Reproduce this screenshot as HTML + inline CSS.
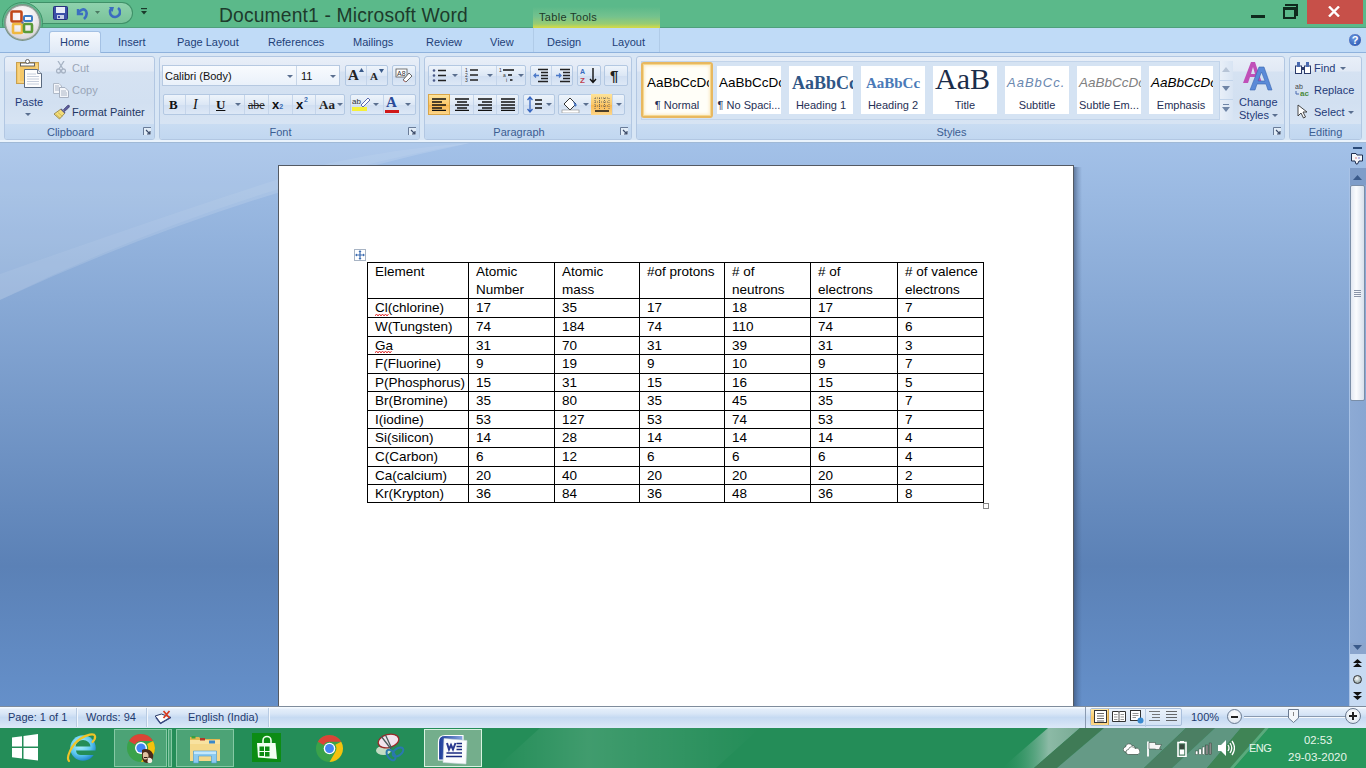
<!DOCTYPE html>
<html><head><meta charset="utf-8">
<style>
*{margin:0;padding:0;box-sizing:border-box}
html,body{width:1366px;height:768px;overflow:hidden;font-family:"Liberation Sans",sans-serif;background:#9dbde6}
.a{position:absolute}
#title{left:0;top:0;width:1366px;height:28px;background:#5bb98a}
#tabs{left:0;top:28px;width:1366px;height:25px;background:#c0dbf7;border-bottom:1px solid #8fb2dc}
#ribbon{left:0;top:53px;width:1366px;height:90px;background:linear-gradient(#d9e7f6,#c9dcf1)}
.grp{position:absolute;top:3px;height:84px;border:1px solid #b2c7e2;border-radius:3px;background:linear-gradient(#e8eff8 0,#e1e9f5 14px,#d5e2f2 15px,#d2e0f1 55%,#dbe7f5 100%)}
.glabel{position:absolute;left:0;right:18px;bottom:0;height:16px;background:#c3d8f0;color:#3b5d92;font-size:11px;text-align:center;line-height:17px;padding-top:1px;white-space:nowrap}
.glabel.full{right:0}
.glbg{position:absolute;left:0;right:0;bottom:0;height:15px;background:linear-gradient(#c9dcf2,#c1d7f0);border-radius:0 0 2px 2px}
#doc{left:0;top:143px;width:1366px;height:564px;background:linear-gradient(#a3c1e8 0%,#5b81b6 75%,#6590ca 100%)}
#page{left:278px;top:165px;width:796px;height:560px;background:#fff;border:1px solid #545a63}
#pshadow{left:1074px;top:167px;width:8px;height:540px;background:linear-gradient(90deg,rgba(50,70,105,.55),rgba(60,85,125,.25) 50%,rgba(80,110,160,0))}
#status{left:0;top:706px;width:1366px;height:22px;border-top:1px solid #7f8c9c;background:linear-gradient(#f4faff 0,#f4faff 1px,#e4eefa 2px,#dae7f7 30%,#c6daf2 50%,#cfe0f4 72%,#dce9f8 100%)}
#taskbar{left:0;top:728px;width:1366px;height:40px;background:#268a56}
.tab{position:absolute;top:8px;font-size:11px;line-height:13px;color:#1e3f78;white-space:nowrap}
table{border-collapse:collapse}
</style></head><body>
<!-- TITLE BAR -->
<div id="title" class="a">
  <div class="a" style="left:0;top:27px;width:1366px;height:1px;background:#4f9f7c"></div>
  <div class="a" style="left:30px;top:2px;width:103px;height:22px;border:1px solid #3f9068;border-left:none;border-radius:0 11px 11px 0;background:linear-gradient(#8fd2ad,#79c29a)"></div>
  <div class="a" style="left:0;top:0;width:60px;height:27px;overflow:hidden"><div class="a" style="left:2px;top:2px;width:41px;height:41px;border-radius:50%;border:1px solid #3f9068;background:#5ebd8d"></div></div>
  <!-- save -->
  <svg class="a" style="left:53px;top:6px" width="15" height="14" viewBox="0 0 15 14"><rect x="0.5" y="0.5" width="14" height="13" rx="1" fill="#3b4fa8" stroke="#28307a"/><rect x="3" y="1" width="9" height="6" fill="#e8ecf8"/><rect x="4" y="9" width="7" height="4" fill="#c7cfe8"/><rect x="5" y="10" width="2" height="2" fill="#3b4fa8"/></svg>
  <!-- undo -->
  <svg class="a" style="left:75px;top:6px" width="14" height="14" viewBox="0 0 14 14"><path d="M3 3 L3 8 L8 8" fill="none" stroke="#3c6fc0" stroke-width="2.4"/><path d="M3 7 Q8 1 11 5 Q13 9 9 13" fill="none" stroke="#3c6fc0" stroke-width="2.6"/></svg>
  <svg class="a" style="left:95px;top:11px" width="5" height="3" viewBox="0 0 5 3"><path d="M0 0H5L2.5 3z" fill="#4c7a62"/></svg>
  <!-- redo -->
  <svg class="a" style="left:108px;top:6px" width="13" height="14" viewBox="0 0 13 14"><path d="M10 2 A5 5 0 1 1 3.5 2.5" fill="none" stroke="#3b6cc0" stroke-width="2.6"/><path d="M1 1 L6 1 L4.5 6z" fill="#3b6cc0"/></svg>
  <svg class="a" style="left:141px;top:8px" width="6" height="7" viewBox="0 0 6 7"><rect x="0" y="0" width="6" height="1.2" fill="#1b3a2b"/><path d="M0 3H6L3 6.5z" fill="#1b3a2b"/></svg>
  <div class="a" style="left:219px;top:3px;font-size:19.3px;letter-spacing:0.15px;color:#1d3b2c;white-space:nowrap;line-height:26px">Document1 - Microsoft Word</div>
  <!-- table tools -->
  <div class="a" style="left:533px;top:7px;width:127px;height:21px;background:linear-gradient(#5cb98a 0%,#74c28e 45%,#98cc72 80%,#c8d850 95%,#d8d840 100%)"></div>
  <div class="a" style="left:539px;top:10px;font-size:11px;letter-spacing:0.3px;color:#1c3a2a;line-height:15px;white-space:nowrap">Table Tools</div>
  <!-- window buttons -->
  <div class="a" style="left:1251px;top:15px;width:14px;height:3px;background:#0f2a1d"></div>
  <div class="a" style="left:1285px;top:4px;width:13px;height:12px;border:2px solid #0f2a1d;border-left:none;border-bottom:none"></div>
  <div class="a" style="left:1283px;top:7px;width:13px;height:12px;border:2px solid #0f2a1d;border-top-width:3px"></div>
  <div class="a" style="left:1307px;top:0;width:56px;height:24px;background:#c75049"></div>
  <svg class="a" style="left:1328px;top:6px" width="12" height="11" viewBox="0 0 12 11"><path d="M1 0.5 L11 10.5 M11 0.5 L1 10.5" stroke="#fff" stroke-width="2.4"/></svg>
</div>
<!-- TABS -->
<div id="tabs" class="a">
  <div class="a" style="left:49px;top:3px;width:52px;height:23px;border:1px solid #a4c1e4;border-bottom:none;border-radius:3px 3px 0 0;background:linear-gradient(#f4f8fd,#dfe9f6)"></div>
  <div class="a" style="left:50px;top:24px;width:50px;height:2px;background:#dfe9f6"></div>
  <div class="a" style="left:533px;top:0;width:1px;height:24px;background:#b0cbe8"></div>
  <div class="a" style="left:659px;top:0;width:1px;height:24px;background:#b0cbe8"></div>
  <div class="tab" style="left:60px">Home</div>
  <div class="tab" style="left:118px">Insert</div>
  <div class="tab" style="left:177px">Page Layout</div>
  <div class="tab" style="left:268px">References</div>
  <div class="tab" style="left:353px">Mailings</div>
  <div class="tab" style="left:426px">Review</div>
  <div class="tab" style="left:490px">View</div>
  <div class="tab" style="left:547px">Design</div>
  <div class="tab" style="left:612px">Layout</div>
  <div class="a" style="left:1348px;top:5px;width:14px;height:14px;border-radius:50%;background:radial-gradient(circle at 40% 35%,#6b98e0,#1d4aa8);border:1px solid #c8d8f0;color:#fff;font-size:11px;font-weight:bold;text-align:center;line-height:12px">?</div>
</div>
<div class="a" style="left:0;top:0;z-index:5">
  <!-- office button -->
  <div class="a" style="left:4px;top:4px;width:37px;height:37px;border-radius:50%;background:#7c9488"></div>
  <div class="a" style="left:5px;top:5px;width:35px;height:35px;border-radius:50%;background:radial-gradient(circle at 50% 35%,#ffffff 0%,#f1eef0 45%,#d8d3d8 80%,#c4c8cc 100%);border:1px solid #9aa8a0"></div>
  <svg class="a" style="left:10px;top:10px" width="25" height="25" viewBox="0 0 25 25">
    <rect x="1.5" y="1.5" width="10" height="10" rx="1" fill="none" stroke="#c04818" stroke-width="2.6"/>
    <rect x="14" y="6" width="8" height="5" rx="1" fill="none" stroke="#3b7bc4" stroke-width="2"/>
    <rect x="3" y="14" width="9" height="9" rx="1" fill="none" stroke="#f0b840" stroke-width="2.6"/>
    <rect x="14" y="14" width="8" height="8" rx="1" fill="none" stroke="#5a9a38" stroke-width="2.6"/>
    <circle cx="12.5" cy="12.5" r="1.2" fill="#6a6a9a"/>
  </svg>
</div>
<!-- RIBBON -->
<div id="ribbon" class="a">
<style>
#ribbon .t{position:absolute;font-size:11px;line-height:13px;color:#1f3763;white-space:nowrap}
#ribbon .bx{position:absolute;border:1px solid #b3c8e2;border-radius:2px;background:linear-gradient(#eef4fb,#dce7f5 50%,#d0def1 51%,#dde8f6)}
#ribbon .sep{position:absolute;width:1px;background:#c5d5ea}
#ribbon .dd{position:absolute;width:0;height:0;border-left:3px solid transparent;border-right:3px solid transparent;border-top:3px solid #5a6f8f}
#ribbon .hl{position:absolute;background:linear-gradient(#fde39a,#fbc86a 50%,#f9b74e 51%,#fcd68a);border:1px solid #d9a64a}
#ribbon .sty{position:absolute;top:13px;width:64px;height:48px;background:#fff}
#ribbon .sty .s{position:absolute;left:0;width:100%;top:9px;text-align:center;white-space:nowrap;overflow:hidden;line-height:16px}
#ribbon .sty .l{position:absolute;left:0;width:100%;top:33px;text-align:center;font-size:11px;color:#1f2f55;white-space:nowrap;line-height:13px}
#ribbon .launch{position:absolute;width:9px;height:9px}
</style>
<div class="a" style="left:0;top:0;width:1366px;height:90px;background:#d8e6f5"></div>
<div class="a" style="left:0;top:87px;width:1366px;height:2px;background:#eaf3fc"></div>
<div class="a" style="left:0;top:89px;width:1366px;height:1px;background:#a0b9d6"></div>

<!-- Clipboard group -->
<div class="grp" style="left:4px;width:151px">
  <div class="glbg"></div><div class="glabel" style="background:none">Clipboard</div>
  <div class="launch" style="left:138px;top:70px"><svg width="9" height="9" viewBox="0 0 9 9" style="position:absolute;left:0;top:0"><path d="M0.5 8V0.5H8" fill="none" stroke="#6a7c98"/><path d="M1 1H8V8H1z" fill="#f4f8fc" fill-opacity="0.6"/><path d="M3 3L7 7M7 4V7H4" fill="none" stroke="#3a4a68" stroke-width="1.1"/></svg></div>
</div>
<!-- paste icon -->
<svg class="a" style="left:15px;top:6px" width="28" height="32" viewBox="0 0 28 32">
  <rect x="1.5" y="3.5" width="22" height="21" fill="#f5c868" stroke="#c8a050"/>
  <rect x="4" y="6" width="18" height="17" fill="none" stroke="#f9dc98" stroke-width="1"/>
  <rect x="5.5" y="4" width="14" height="3" fill="#fff" stroke="#555" stroke-width="0.9"/>
  <circle cx="12.5" cy="2.5" r="2" fill="#fff" stroke="#555" stroke-width="0.9"/>
  <path d="M9.5 10.5H22.5L26.5 14.5V28.5H9.5z" fill="#fdfdfd" stroke="#5a6a80"/>
  <path d="M22.5 10.5V14.5H26.5" fill="#e8ecf2" stroke="#5a6a80" stroke-width="0.8"/>
  <path d="M12 15H21M12 17.5H24M12 20H24M12 22.5H24M12 25H24" stroke="#c0c8d8" stroke-width="0.9"/>
</svg>
<div class="t" style="left:15px;top:43px;color:#1f3a78">Paste</div>
<div class="dd" style="left:25px;top:60px"></div>
<!-- cut -->
<svg class="a" style="left:56px;top:8px" width="10" height="13" viewBox="0 0 10 13"><path d="M2 0L7 8M8 0L3 8" stroke="#a7b3c4" stroke-width="1.3"/><circle cx="2.5" cy="10" r="2" fill="none" stroke="#a7b3c4" stroke-width="1.3"/><circle cx="7.5" cy="10" r="2" fill="none" stroke="#a7b3c4" stroke-width="1.3"/></svg>
<div class="t" style="left:72px;top:9px;color:#9aa6b8">Cut</div>
<!-- copy -->
<svg class="a" style="left:53px;top:30px" width="16" height="15" viewBox="0 0 16 15"><path d="M0.5 0.5H6L8.5 3V10.5H0.5z" fill="#f4f6fa" stroke="#b0bac8"/><path d="M2 3H6M2 5H7M2 7H7" stroke="#9aa6b8" stroke-width="0.8"/><path d="M6.5 4.5H12L15.5 8V14.5H6.5z" fill="#f4f6fa" stroke="#a8b2c2"/><path d="M8 8H13M8 10H14M8 12H14" stroke="#9aa6b8" stroke-width="0.8"/></svg>
<div class="t" style="left:72px;top:31px;color:#9aa6b8">Copy</div>
<!-- format painter -->
<svg class="a" style="left:53px;top:51px" width="17" height="16" viewBox="0 0 17 16"><path d="M10.5 5.5L14.5 1.5Q16 0.5 16.5 2Q16.5 3 15.5 4L11.5 7.5z" fill="#5a5a9a" stroke="#3a3a6a" stroke-width="0.6"/><path d="M8 5L12 9L6.5 15L1 10z" fill="#f2dc78" stroke="#8a7a40" stroke-width="0.8"/><path d="M3 10.5L7 14M5 8.5L9.5 12.5" stroke="#c8b050" stroke-width="0.8"/><path d="M8 5L12 9" stroke="#5a5a8a" stroke-width="1.2"/></svg>
<div class="t" style="left:72px;top:53px;color:#1f3763">Format Painter</div>

<!-- Font group -->
<div class="grp" style="left:159px;width:261px">
  <div class="glbg"></div><div class="glabel" style="background:none">Font</div>
  <div class="launch" style="left:248px;top:70px"><svg width="9" height="9" viewBox="0 0 9 9" style="position:absolute;left:0;top:0"><path d="M0.5 8V0.5H8" fill="none" stroke="#6a7c98"/><path d="M1 1H8V8H1z" fill="#f4f8fc" fill-opacity="0.6"/><path d="M3 3L7 7M7 4V7H4" fill="none" stroke="#3a4a68" stroke-width="1.1"/></svg></div>
</div>
<div class="a" style="left:162px;top:12px;width:178px;height:21px;border:1px solid #b6c9e1;background:linear-gradient(#f8fbfe,#eaf1fa)"></div>
<div class="a" style="left:296px;top:13px;width:1px;height:19px;background:#c8d6e8"></div>
<div class="t" style="left:165px;top:17px;color:#111">Calibri (Body)</div>
<div class="dd" style="left:287px;top:22px"></div>
<div class="t" style="left:301px;top:17px;color:#111">11</div>
<div class="dd" style="left:330px;top:22px"></div>
<div class="bx" style="left:345px;top:12px;width:43px;height:21px"></div>
<div class="sep" style="left:366px;top:13px;height:19px"></div>
<div class="a" style="left:348px;top:14px;font-family:'Liberation Serif';font-weight:bold;font-size:15px;line-height:17px;color:#222">A</div>
<svg class="a" style="left:359px;top:15px" width="5" height="4"><path d="M0 4H5L2.5 0z" fill="#3a5a8a"/></svg>
<div class="a" style="left:370px;top:17px;font-family:'Liberation Serif';font-weight:bold;font-size:11px;line-height:13px;color:#222">A</div>
<svg class="a" style="left:379px;top:16px" width="5" height="4"><path d="M0 0H5L2.5 4z" fill="#3a5a8a"/></svg>
<div class="bx" style="left:392px;top:12px;width:24px;height:21px"></div>
<svg class="a" style="left:395px;top:15px" width="18" height="15" viewBox="0 0 18 15"><rect x="1" y="1" width="11" height="8" fill="#fff" stroke="#555" stroke-width="0.8"/><text x="2" y="8" font-size="7" font-family="Liberation Sans" fill="#333">A8</text><path d="M8 12L14 5L17 8L11 14z" fill="#fff" stroke="#666"/><path d="M8 12L11 14L9.5 14z" fill="#e08080"/></svg>
<!-- row2 -->
<div class="bx" style="left:163px;top:41px;width:182px;height:21px"></div>
<div class="sep" style="left:185px;top:42px;height:19px"></div>
<div class="sep" style="left:209px;top:42px;height:19px"></div>
<div class="sep" style="left:244px;top:42px;height:19px"></div>
<div class="sep" style="left:268px;top:42px;height:19px"></div>
<div class="sep" style="left:292px;top:42px;height:19px"></div>
<div class="sep" style="left:315px;top:42px;height:19px"></div>
<div class="a" style="left:169px;top:44px;font-family:'Liberation Serif';font-weight:bold;font-size:13px;line-height:15px;color:#111">B</div>
<div class="a" style="left:193px;top:44px;font-family:'Liberation Serif';font-style:italic;font-size:14px;line-height:15px;color:#111">I</div>
<div class="a" style="left:216px;top:44px;font-family:'Liberation Serif';font-weight:bold;font-size:13px;line-height:15px;color:#111;text-decoration:underline">U</div>
<div class="dd" style="left:235px;top:50px"></div>
<div class="a" style="left:248px;top:45px;font-family:'Liberation Serif';font-size:12px;line-height:14px;color:#222;text-decoration:line-through">abe</div>
<div class="a" style="left:272px;top:44px;font-family:'Liberation Sans';font-weight:bold;font-size:13px;line-height:15px;color:#111">x<span style="font-size:7px;color:#3a6ab0">2</span></div>
<div class="a" style="left:296px;top:44px;font-family:'Liberation Sans';font-weight:bold;font-size:13px;line-height:15px;color:#111">x</div><div class="a" style="left:304px;top:43px;font-size:7px;line-height:8px;font-weight:bold;color:#3a6ab0">2</div>
<div class="a" style="left:319px;top:44px;font-family:'Liberation Serif';font-weight:bold;font-size:13px;line-height:15px;color:#222">Aa</div>
<div class="dd" style="left:337px;top:50px"></div>
<div class="bx" style="left:350px;top:41px;width:66px;height:21px"></div>
<div class="sep" style="left:383px;top:42px;height:19px"></div>
<svg class="a" style="left:352px;top:43px" width="20" height="16" viewBox="0 0 20 16"><rect x="0" y="11" width="15" height="4" fill="#f5f03a"/><text x="0" y="8" font-size="8" font-family="Liberation Sans" fill="#333">ab</text><path d="M9 9L16 2L18 4L11 11z" fill="#fff" stroke="#5a6ab0"/></svg>
<div class="dd" style="left:373px;top:50px"></div>
<div class="a" style="left:386px;top:42px;font-family:'Liberation Serif';font-size:15px;line-height:15px;color:#2a4a98;font-weight:bold">A</div>
<div class="a" style="left:385px;top:57px;width:14px;height:3px;background:#d01818"></div>
<div class="dd" style="left:405px;top:50px"></div>

<!-- Paragraph group -->
<div class="grp" style="left:424px;width:208px">
  <div class="glbg"></div><div class="glabel" style="background:none">Paragraph</div>
  <div class="launch" style="left:195px;top:70px"><svg width="9" height="9" viewBox="0 0 9 9" style="position:absolute;left:0;top:0"><path d="M0.5 8V0.5H8" fill="none" stroke="#6a7c98"/><path d="M1 1H8V8H1z" fill="#f4f8fc" fill-opacity="0.6"/><path d="M3 3L7 7M7 4V7H4" fill="none" stroke="#3a4a68" stroke-width="1.1"/></svg></div>
</div>
<div class="bx" style="left:428px;top:12px;width:98px;height:21px"></div>
<div class="sep" style="left:461px;top:13px;height:19px"></div>
<div class="sep" style="left:496px;top:13px;height:19px"></div>
<svg class="a" style="left:432px;top:15px" width="18" height="15" viewBox="0 0 18 15"><circle cx="2" cy="2.5" r="1.3" fill="#4a5a8a"/><circle cx="2" cy="7.5" r="1.3" fill="#4a5a8a"/><circle cx="2" cy="12.5" r="1.3" fill="#4a5a8a"/><path d="M6 2.5H14M6 7.5H14M6 12.5H14" stroke="#222" stroke-width="1.4"/></svg>
<div class="dd" style="left:452px;top:21px"></div>
<svg class="a" style="left:465px;top:14px" width="18" height="16" viewBox="0 0 18 16"><text x="0" y="5" font-size="5" font-family="Liberation Sans" fill="#333">1</text><text x="0" y="10" font-size="5" font-family="Liberation Sans" fill="#333">2</text><text x="0" y="15" font-size="5" font-family="Liberation Sans" fill="#333">3</text><path d="M5 3H13M5 8H13M5 13H13" stroke="#222" stroke-width="1.4"/></svg>
<div class="dd" style="left:487px;top:21px"></div>
<svg class="a" style="left:499px;top:14px" width="18" height="16" viewBox="0 0 18 16"><text x="0" y="5" font-size="5" font-family="Liberation Sans" fill="#333">1</text><text x="4" y="10" font-size="5" font-family="Liberation Sans" fill="#333">a</text><text x="7" y="15" font-size="5" font-family="Liberation Sans" fill="#333">i</text><path d="M4 3H15M9 8H13M11 13H13.5" stroke="#111" stroke-width="1.4"/></svg>
<div class="dd" style="left:518px;top:21px"></div>
<div class="bx" style="left:530px;top:12px;width:43px;height:21px"></div>
<div class="sep" style="left:551px;top:13px;height:19px"></div>
<svg class="a" style="left:533px;top:15px" width="16" height="15" viewBox="0 0 16 15"><path d="M5 1.5H15M8 4.5H15M8 7.5H15M8 10.5H15M5 13.5H15" stroke="#222" stroke-width="1.3"/><path d="M6 7.5H1M3 5.5L1 7.5L3 9.5" stroke="#4a78c8" stroke-width="1.3" fill="none"/></svg>
<svg class="a" style="left:555px;top:15px" width="16" height="15" viewBox="0 0 16 15"><path d="M5 1.5H15M8 4.5H15M8 7.5H15M8 10.5H15M5 13.5H15" stroke="#222" stroke-width="1.3"/><path d="M1 7.5H6M4 5.5L6 7.5L4 9.5" stroke="#4a78c8" stroke-width="1.3" fill="none"/></svg>
<div class="bx" style="left:577px;top:12px;width:24px;height:21px"></div>
<svg class="a" style="left:580px;top:14px" width="18" height="17" viewBox="0 0 18 17"><text x="0" y="7" font-size="7" font-family="Liberation Sans" fill="#3a6ac0" font-weight="bold">A</text><text x="0" y="16" font-size="8" font-family="Liberation Sans" fill="#c04050" font-weight="bold">Z</text><path d="M13 1V15M10 12L13 15.5L16 12" stroke="#111" stroke-width="1.4" fill="none"/></svg>
<div class="bx" style="left:604px;top:12px;width:24px;height:21px"></div>
<div class="a" style="left:610px;top:14px;font-size:15px;font-weight:bold;line-height:17px;color:#222">¶</div>
<!-- row2 paragraph -->
<div class="bx" style="left:428px;top:41px;width:91px;height:21px"></div>
<div class="hl" style="left:428px;top:41px;width:22px;height:21px"></div>
<div class="sep" style="left:473px;top:42px;height:19px"></div>
<div class="sep" style="left:496px;top:42px;height:19px"></div>
<svg class="a" style="left:432px;top:45px" width="14" height="13" viewBox="0 0 14 13"><path d="M0 1H14M0 4H10M0 7H14M0 10H10M0 12.5H14" stroke="#111" stroke-width="1.3"/></svg>
<svg class="a" style="left:455px;top:45px" width="14" height="13" viewBox="0 0 14 13"><path d="M0 1H14M2 4H12M0 7H14M2 10H12M0 12.5H14" stroke="#111" stroke-width="1.3"/></svg>
<svg class="a" style="left:478px;top:45px" width="14" height="13" viewBox="0 0 14 13"><path d="M0 1H14M4 4H14M0 7H14M4 10H14M0 12.5H14" stroke="#111" stroke-width="1.3"/></svg>
<svg class="a" style="left:501px;top:45px" width="14" height="13" viewBox="0 0 14 13"><path d="M0 1H14M0 4H14M0 7H14M0 10H14M0 12.5H14" stroke="#111" stroke-width="1.3"/></svg>
<div class="bx" style="left:523px;top:41px;width:32px;height:21px"></div>
<svg class="a" style="left:527px;top:43px" width="20" height="17" viewBox="0 0 20 17"><path d="M3 1V16M0.5 4L3 1L5.5 4M0.5 13L3 16L5.5 13" stroke="#3a68c0" stroke-width="1.3" fill="none"/><path d="M8 4H15M8 8H15M8 12H15" stroke="#111" stroke-width="1.3"/></svg>
<div class="dd" style="left:546px;top:50px"></div>
<div class="bx" style="left:558px;top:41px;width:67px;height:21px"></div>
<div class="hl" style="left:591px;top:41px;width:21px;height:21px;border:none"></div>
<div class="sep" style="left:612px;top:42px;height:19px"></div>
<svg class="a" style="left:561px;top:43px" width="20" height="17" viewBox="0 0 20 17"><path d="M3 8L9 2L15 8L9 14z" fill="#fff" stroke="#333"/><path d="M12 5L16 9L14 11" fill="#4a78c8"/><rect x="1" y="14" width="17" height="3" fill="#fff" stroke="#888" stroke-width="0.6"/></svg>
<div class="dd" style="left:583px;top:50px"></div>
<svg class="a" style="left:594px;top:44px" width="16" height="15" viewBox="0 0 16 15"><path d="M1 1H15V13M1 1V13M1 5H15M1 9H15M5.5 1V13M10.5 1V13" stroke="#555" stroke-width="0.8" stroke-dasharray="1 1" fill="none"/><path d="M1 14H15" stroke="#111" stroke-width="1.5"/></svg>
<div class="dd" style="left:616px;top:50px"></div>

<!-- Styles group -->
<div class="grp" style="left:636px;width:649px">
  <div class="glbg"></div><div class="glabel" style="background:none">Styles</div>
  <div class="launch" style="left:636px;top:70px"><svg width="9" height="9" viewBox="0 0 9 9" style="position:absolute;left:0;top:0"><path d="M0.5 8V0.5H8" fill="none" stroke="#6a7c98"/><path d="M1 1H8V8H1z" fill="#f4f8fc" fill-opacity="0.6"/><path d="M3 3L7 7M7 4V7H4" fill="none" stroke="#3a4a68" stroke-width="1.1"/></svg></div>
</div>
<div class="a" style="left:641px;top:8px;width:592px;height:59px;border:1px solid #c2d4ea;background:#d5e3f3"></div>
<div class="a" style="left:641px;top:9px;width:72px;height:56px;border:2px solid #e8b860;border-radius:3px;box-shadow:inset 0 0 0 1px #f6d890,inset 0 0 3px 2px #fbeccb;background:#fffef8"></div>
<div class="sty" style="left:645px;background:transparent"><div class="s" style="font-size:13.5px;color:#000;text-align:left;padding-left:2px">AaBbCcDc</div><div class="l">¶ Normal</div></div>
<div class="sty" style="left:717px"><div class="s" style="font-size:13.5px;color:#000;text-align:left;padding-left:2px">AaBbCcDc</div><div class="l">¶ No Spaci...</div></div>
<div class="sty" style="left:789px"><div class="s" style="font-family:'Liberation Serif';font-weight:bold;font-size:18px;color:#2f5686;text-align:left;padding-left:3px">AaBbCc</div><div class="l">Heading 1</div></div>
<div class="sty" style="left:861px"><div class="s" style="font-family:'Liberation Serif';font-weight:bold;font-size:15px;color:#4a7ab8">AaBbCc</div><div class="l">Heading 2</div></div>
<div class="sty" style="left:933px"><div class="s" style="font-family:'Liberation Serif';font-size:30px;top:-2px;line-height:30px;color:#1b2d4a;text-align:left;padding-left:2px">AaB</div><div class="l">Title</div></div>
<div class="sty" style="left:1005px"><div class="s" style="font-style:italic;font-size:13px;color:#6a88b0;letter-spacing:1px;text-align:left;padding-left:2px">AaBbCc.</div><div class="l">Subtitle</div></div>
<div class="sty" style="left:1077px"><div class="s" style="font-style:italic;font-size:13.5px;color:#808080;text-align:left;padding-left:2px">AaBbCcDc</div><div class="l">Subtle Em...</div></div>
<div class="sty" style="left:1149px"><div class="s" style="font-style:italic;font-size:13.5px;color:#000;text-align:left;padding-left:2px">AaBbCcDc</div><div class="l">Emphasis</div></div>
<div class="a" style="left:1219px;top:8px;width:14px;height:59px;border-left:1px solid #c2d4ea;background:linear-gradient(90deg,#e8eff8,#d8e4f3)"></div>
<div class="a" style="left:1219px;top:27px;width:14px;height:1px;background:#c2d4ea"></div>
<div class="a" style="left:1219px;top:46px;width:14px;height:1px;background:#c2d4ea"></div>
<svg class="a" style="left:1222px;top:14px" width="8" height="5"><path d="M0 5H8L4 0z" fill="#b7c4d6"/></svg>
<svg class="a" style="left:1222px;top:33px" width="8" height="5"><path d="M0 0H8L4 5z" fill="#6f85a6"/></svg>
<div class="a" style="left:1223px;top:51px;width:6px;height:1px;background:#6f85a6"></div>
<svg class="a" style="left:1222px;top:54px" width="8" height="5"><path d="M0 0H8L4 5z" fill="#6f85a6"/></svg>
<svg class="a" style="left:1241px;top:8px" width="34" height="30" viewBox="0 0 34 30"><path d="M2 22L10 1H14L21 22H17L15 16H9L7 22z M10 13H14L12 6z" fill="#c050b8"/><path d="M9 29L18 6H23L31 29H27L25 23H16L14 29z M17 20H24L20.5 11z" fill="#5a8ad8" stroke="#3a66b0" stroke-width="0.6"/></svg>
<div class="t" style="left:1239px;top:43px;color:#1f3a78">Change</div>
<div class="t" style="left:1239px;top:56px;color:#1f3a78">Styles</div>
<div class="dd" style="left:1272px;top:61px"></div>

<!-- Editing group -->
<div class="grp" style="left:1289px;width:73px">
  <div class="glbg"></div><div class="glabel full" style="background:none">Editing</div>
</div>
<svg class="a" style="left:1295px;top:8px" width="16" height="13" viewBox="0 0 16 13"><rect x="0.5" y="5" width="6" height="7.5" fill="#fff" stroke="#2a3a6a"/><rect x="9.5" y="5" width="6" height="7.5" fill="#fff" stroke="#2a3a6a"/><rect x="2" y="1" width="3" height="5" fill="#4a6ab0"/><rect x="11" y="1" width="3" height="5" fill="#4a6ab0"/><rect x="6" y="6" width="4" height="3" fill="#2a3a6a"/></svg>
<div class="t" style="left:1314px;top:9px;color:#1f3a78">Find</div>
<div class="dd" style="left:1340px;top:14px"></div>
<svg class="a" style="left:1295px;top:30px" width="17" height="14" viewBox="0 0 17 14"><text x="0" y="6" font-size="7" font-family="Liberation Sans" fill="#444">ab</text><text x="5" y="13" font-size="8" font-weight="bold" font-family="Liberation Sans" fill="#4a8a3a">ac</text><path d="M1 8V11H4" stroke="#4a6ab0" fill="none"/></svg>
<div class="t" style="left:1314px;top:31px;color:#1f3a78">Replace</div>
<svg class="a" style="left:1297px;top:51px" width="11" height="15" viewBox="0 0 11 15"><path d="M1 1V12L4 9L6.5 14L8.5 13L6 8H10z" fill="#fff" stroke="#333" stroke-width="0.9"/></svg>
<div class="t" style="left:1314px;top:53px;color:#1f3a78">Select</div>
<div class="dd" style="left:1348px;top:58px"></div>
</div>
<!-- DOC AREA -->
<div id="doc" class="a"><svg class="a" style="left:0;top:0" width="600" height="200" viewBox="0 0 600 200"><path d="M0 157Q230 50 470 0H0z" fill="#fff" fill-opacity="0.13"/><path d="M0 131Q200 60 330 20Q400 5 470 0Q240 40 0 157z" fill="#fff" fill-opacity="0.07"/></svg></div>
<div id="pshadow" class="a"></div>
<div id="page" class="a"></div>
<div class="a" style="left:0;top:0;width:1366px;height:768px">
<style>.cl{position:absolute;font-size:13.5px;line-height:18px;color:#000;white-space:nowrap}.ln{position:absolute;background:#000}</style>
<div class="ln" style="left:367px;top:262px;width:1px;height:241px"></div>
<div class="ln" style="left:468px;top:262px;width:1px;height:241px"></div>
<div class="ln" style="left:554px;top:262px;width:1px;height:241px"></div>
<div class="ln" style="left:639px;top:262px;width:1px;height:241px"></div>
<div class="ln" style="left:724px;top:262px;width:1px;height:241px"></div>
<div class="ln" style="left:810px;top:262px;width:1px;height:241px"></div>
<div class="ln" style="left:897px;top:262px;width:1px;height:241px"></div>
<div class="ln" style="left:983px;top:262px;width:1px;height:241px"></div>
<div class="ln" style="left:367px;top:262px;width:617px;height:1px"></div>
<div class="ln" style="left:367px;top:298px;width:617px;height:1px"></div>
<div class="ln" style="left:367px;top:317px;width:617px;height:1px"></div>
<div class="ln" style="left:367px;top:336px;width:617px;height:1px"></div>
<div class="ln" style="left:367px;top:354px;width:617px;height:1px"></div>
<div class="ln" style="left:367px;top:373px;width:617px;height:1px"></div>
<div class="ln" style="left:367px;top:391px;width:617px;height:1px"></div>
<div class="ln" style="left:367px;top:410px;width:617px;height:1px"></div>
<div class="ln" style="left:367px;top:428px;width:617px;height:1px"></div>
<div class="ln" style="left:367px;top:447px;width:617px;height:1px"></div>
<div class="ln" style="left:367px;top:466px;width:617px;height:1px"></div>
<div class="ln" style="left:367px;top:484px;width:617px;height:1px"></div>
<div class="ln" style="left:367px;top:502px;width:617px;height:1px"></div>
<div class="cl" style="left:375px;top:263px">Element</div>
<div class="cl" style="left:476px;top:263px">Atomic</div>
<div class="cl" style="left:476px;top:281px">Number</div>
<div class="cl" style="left:562px;top:263px">Atomic</div>
<div class="cl" style="left:562px;top:281px">mass</div>
<div class="cl" style="left:647px;top:263px">#of protons</div>
<div class="cl" style="left:732px;top:263px"># of</div>
<div class="cl" style="left:732px;top:281px">neutrons</div>
<div class="cl" style="left:818px;top:263px"># of</div>
<div class="cl" style="left:818px;top:281px">electrons</div>
<div class="cl" style="left:905px;top:263px"># of valence</div>
<div class="cl" style="left:905px;top:281px">electrons</div>
<div class="cl" style="left:375px;top:299px">Cl(chlorine)</div>
<div class="cl" style="left:476px;top:299px">17</div>
<div class="cl" style="left:562px;top:299px">35</div>
<div class="cl" style="left:647px;top:299px">17</div>
<div class="cl" style="left:732px;top:299px">18</div>
<div class="cl" style="left:818px;top:299px">17</div>
<div class="cl" style="left:905px;top:299px">7</div>
<div class="cl" style="left:375px;top:318px">W(Tungsten)</div>
<div class="cl" style="left:476px;top:318px">74</div>
<div class="cl" style="left:562px;top:318px">184</div>
<div class="cl" style="left:647px;top:318px">74</div>
<div class="cl" style="left:732px;top:318px">110</div>
<div class="cl" style="left:818px;top:318px">74</div>
<div class="cl" style="left:905px;top:318px">6</div>
<div class="cl" style="left:375px;top:337px">Ga</div>
<div class="cl" style="left:476px;top:337px">31</div>
<div class="cl" style="left:562px;top:337px">70</div>
<div class="cl" style="left:647px;top:337px">31</div>
<div class="cl" style="left:732px;top:337px">39</div>
<div class="cl" style="left:818px;top:337px">31</div>
<div class="cl" style="left:905px;top:337px">3</div>
<div class="cl" style="left:375px;top:355px">F(Fluorine)</div>
<div class="cl" style="left:476px;top:355px">9</div>
<div class="cl" style="left:562px;top:355px">19</div>
<div class="cl" style="left:647px;top:355px">9</div>
<div class="cl" style="left:732px;top:355px">10</div>
<div class="cl" style="left:818px;top:355px">9</div>
<div class="cl" style="left:905px;top:355px">7</div>
<div class="cl" style="left:375px;top:374px">P(Phosphorus)</div>
<div class="cl" style="left:476px;top:374px">15</div>
<div class="cl" style="left:562px;top:374px">31</div>
<div class="cl" style="left:647px;top:374px">15</div>
<div class="cl" style="left:732px;top:374px">16</div>
<div class="cl" style="left:818px;top:374px">15</div>
<div class="cl" style="left:905px;top:374px">5</div>
<div class="cl" style="left:375px;top:392px">Br(Bromine)</div>
<div class="cl" style="left:476px;top:392px">35</div>
<div class="cl" style="left:562px;top:392px">80</div>
<div class="cl" style="left:647px;top:392px">35</div>
<div class="cl" style="left:732px;top:392px">45</div>
<div class="cl" style="left:818px;top:392px">35</div>
<div class="cl" style="left:905px;top:392px">7</div>
<div class="cl" style="left:375px;top:411px">I(iodine)</div>
<div class="cl" style="left:476px;top:411px">53</div>
<div class="cl" style="left:562px;top:411px">127</div>
<div class="cl" style="left:647px;top:411px">53</div>
<div class="cl" style="left:732px;top:411px">74</div>
<div class="cl" style="left:818px;top:411px">53</div>
<div class="cl" style="left:905px;top:411px">7</div>
<div class="cl" style="left:375px;top:429px">Si(silicon)</div>
<div class="cl" style="left:476px;top:429px">14</div>
<div class="cl" style="left:562px;top:429px">28</div>
<div class="cl" style="left:647px;top:429px">14</div>
<div class="cl" style="left:732px;top:429px">14</div>
<div class="cl" style="left:818px;top:429px">14</div>
<div class="cl" style="left:905px;top:429px">4</div>
<div class="cl" style="left:375px;top:448px">C(Carbon)</div>
<div class="cl" style="left:476px;top:448px">6</div>
<div class="cl" style="left:562px;top:448px">12</div>
<div class="cl" style="left:647px;top:448px">6</div>
<div class="cl" style="left:732px;top:448px">6</div>
<div class="cl" style="left:818px;top:448px">6</div>
<div class="cl" style="left:905px;top:448px">4</div>
<div class="cl" style="left:375px;top:467px">Ca(calcium)</div>
<div class="cl" style="left:476px;top:467px">20</div>
<div class="cl" style="left:562px;top:467px">40</div>
<div class="cl" style="left:647px;top:467px">20</div>
<div class="cl" style="left:732px;top:467px">20</div>
<div class="cl" style="left:818px;top:467px">20</div>
<div class="cl" style="left:905px;top:467px">2</div>
<div class="cl" style="left:375px;top:485px">Kr(Krypton)</div>
<div class="cl" style="left:476px;top:485px">36</div>
<div class="cl" style="left:562px;top:485px">84</div>
<div class="cl" style="left:647px;top:485px">36</div>
<div class="cl" style="left:732px;top:485px">48</div>
<div class="cl" style="left:818px;top:485px">36</div>
<div class="cl" style="left:905px;top:485px">8</div>
<div class="a" style="left:354px;top:249px;width:12px;height:12px;border:1px solid #a8b4c4;background:#fff"></div>
<svg class="a" style="left:355px;top:250px" width="10" height="10" viewBox="0 0 10 10"><path d="M5 1V9M1 5H9" stroke="#3a6ab0" stroke-width="1.2"/><path d="M5 0L3.5 2H6.5zM5 10L3.5 8H6.5zM0 5L2 3.5V6.5zM10 5L8 3.5V6.5z" fill="#3a6ab0"/></svg>
<div class="a" style="left:983px;top:503px;width:6px;height:6px;border:1px solid #888;background:#fff"></div>
<svg class="a" style="left:375px;top:313px" width="14" height="4" viewBox="0 0 14 4"><path d="M0 3L1.5 1L3 3L4.5 1L6 3L7.5 1L9 3L10.5 1L12 3L13.5 1" fill="none" stroke="#e02020" stroke-width="0.9"/></svg>
<svg class="a" style="left:375px;top:350px" width="18" height="4" viewBox="0 0 18 4"><path d="M0 3L1.5 1L3 3L4.5 1L6 3L7.5 1L9 3L10.5 1L12 3L13.5 1L15 3L16.5 1" fill="none" stroke="#e02020" stroke-width="0.9"/></svg>
</div>
<!-- scrollbar -->
<div class="a" style="left:1353px;top:147px;width:9px;height:2px;background:#2a4a78"></div>
<svg class="a" style="left:1350px;top:152px" width="14" height="13" viewBox="0 0 14 13"><path d="M1.5 1.5H6L7 3H12.5V9H9L7.5 12H6L5 9H1.5z" fill="#f4f6fa" stroke="#1e2e50"/><circle cx="6" cy="6" r="0.7" fill="#d05050"/><circle cx="9" cy="6" r="0.7" fill="#5050d0"/></svg>
<div class="a" style="left:1349px;top:168px;width:17px;height:539px;background:linear-gradient(90deg,#a8c2e6 0,#a8c2e6 1px,#8daad4 1px,#88a6d2)"></div>
<div class="a" style="left:1350px;top:168px;width:16px;height:17px;background:#7f9dc9"></div>
<svg class="a" style="left:1353px;top:175px" width="9" height="5"><path d="M0 5H9L4.5 0z" fill="#3a5a8a"/></svg>
<div class="a" style="left:1350px;top:185px;width:15px;height:216px;border:1px solid #7a8ea8;border-radius:2px;background:linear-gradient(90deg,#e2e8f2,#fbfcfe 40%,#d8e0ec)"></div>
<div class="a" style="left:1354px;top:290px;width:7px;height:1px;background:#8a94a8"></div>
<div class="a" style="left:1354px;top:292px;width:7px;height:1px;background:#8a94a8"></div>
<div class="a" style="left:1354px;top:294px;width:7px;height:1px;background:#8a94a8"></div>
<div class="a" style="left:1354px;top:296px;width:7px;height:1px;background:#8a94a8"></div>
<div class="a" style="left:1350px;top:643px;width:16px;height:17px;background:#8aa5cd"></div>
<svg class="a" style="left:1353px;top:645px" width="9" height="5"><path d="M0 0H9L4.5 5z" fill="#3a5a8a"/></svg>
<div class="a" style="left:1350px;top:654px;width:16px;height:53px;background:#c6daf2"></div>
<svg class="a" style="left:1353px;top:659px" width="9" height="8"><path d="M0 4H9L4.5 0zM0 8H9L4.5 4z" fill="#111"/></svg>
<div class="a" style="left:1353px;top:675px;width:9px;height:9px;border-radius:50%;background:radial-gradient(circle at 40% 35%,#fff,#9aa 70%,#556);border:1px solid #333"></div>
<svg class="a" style="left:1353px;top:692px" width="9" height="8"><path d="M0 0H9L4.5 4zM0 4H9L4.5 8z" fill="#111"/></svg>
<!-- STATUS BAR -->
<div id="status" class="a">
<style>#status .st{position:absolute;top:4px;font-size:11px;line-height:12px;color:#1e3a6e;white-space:nowrap}
#status .sp{position:absolute;top:1px;width:2px;height:19px;border-left:1px solid #b8cbe2;border-right:1px solid #f2f7fd}</style>
<div class="st" style="left:8px">Page: 1 of 1</div>
<div class="sp" style="left:76px"></div>
<div class="st" style="left:86px">Words: 94</div>
<div class="sp" style="left:146px"></div>
<svg class="a" style="left:154px;top:1px" width="19" height="17" viewBox="0 0 19 17"><path d="M1.2 8L7.4 6L16.8 9.4L6.5 15.4z" fill="#fbfcfe" stroke="#2a3a68" stroke-width="1"/><path d="M2 9.5L6.5 15.4L16.8 9.4" fill="none" stroke="#3a4a80" stroke-width="1.3"/><path d="M9.5 3L15.5 10M15.5 3L9.5 10" stroke="#d83a20" stroke-width="1.7"/></svg>
<div class="st" style="left:188px">English (India)</div>
<div class="sp" style="left:268px"></div>
<div class="a" style="left:1085px;top:0;width:1px;height:21px;background:#8a9ab0"></div>
<!-- right side view buttons -->
<div class="a" style="left:1090px;top:1px;width:92px;height:18px;border:1px solid #a9bfdc;border-radius:2px;background:linear-gradient(#eaf1fa,#d3e2f4)"></div>
<div class="a" style="left:1091px;top:2px;width:18px;height:16px;background:linear-gradient(#fde8a8,#f9c766 55%,#fbd98c);border-right:1px solid #d8a850"></div>
<svg class="a" style="left:1094px;top:3px" width="13" height="13" viewBox="0 0 13 13"><rect x="0.5" y="0.5" width="12" height="12" fill="#fff" stroke="#333"/><path d="M3 3.5H10M3 6H10M3 8.5H10M3 11H10" stroke="#444" stroke-width="0.8"/></svg>
<svg class="a" style="left:1112px;top:3px" width="14" height="13" viewBox="0 0 14 13"><path d="M0.5 1.5H6.5L7 2.5L7.5 1.5H13.5V11.5H0.5z" fill="#fff" stroke="#333"/><path d="M7 2.5V11.5" stroke="#333" stroke-width="0.8"/><path d="M2 4.5H5.5M2 7H5.5M2 9.5H5.5M8.5 4.5H12M8.5 7H12M8.5 9.5H12" stroke="#666" stroke-width="0.7"/></svg>
<svg class="a" style="left:1130px;top:3px" width="14" height="14" viewBox="0 0 14 14"><rect x="0.5" y="0.5" width="10" height="10" fill="#fff" stroke="#333"/><path d="M2.5 3.5H8.5M2.5 5.5H8.5M2.5 7.5H6" stroke="#666" stroke-width="0.7"/><circle cx="10.5" cy="10.5" r="3" fill="#3a8ad0"/></svg>
<svg class="a" style="left:1148px;top:3px" width="13" height="13" viewBox="0 0 13 13"><path d="M1 1.5H12M4 4.5H12M4 7.5H12M1 10.5H12" stroke="#555" stroke-width="0.8"/></svg>
<svg class="a" style="left:1165px;top:3px" width="13" height="13" viewBox="0 0 13 13"><path d="M1 1.5H12M1 4.5H12M1 7.5H12M1 10.5H12" stroke="#444" stroke-width="0.8"/></svg>
<div class="sp" style="left:1145px;width:1px;border-right:none"></div>
<div class="st" style="left:1191px;color:#1e3a6e">100%</div>
<div class="a" style="left:1227px;top:2px;width:15px;height:15px;border-radius:50%;border:1px solid #6a7a90;background:radial-gradient(circle at 50% 35%,#fff,#d8e2ee)"></div>
<div class="a" style="left:1231px;top:9px;width:7px;height:2px;background:#222"></div>
<div class="a" style="left:1244px;top:9px;width:102px;height:1px;background:#8a9ab0"></div>
<div class="a" style="left:1244px;top:10px;width:102px;height:1px;background:#f4f8fc"></div>
<svg class="a" style="left:1288px;top:2px" width="11" height="14" viewBox="0 0 11 14"><path d="M0.5 0.5H10.5V9L5.5 13.5L0.5 9z" fill="#f4f7fb" stroke="#6a7a90"/><path d="M5.5 3V7" stroke="#888"/></svg>
<div class="a" style="left:1345px;top:1px;width:16px;height:16px;border-radius:50%;border:1px solid #6a7a90;background:radial-gradient(circle at 50% 35%,#fff,#d8e2ee)"></div>
<div class="a" style="left:1349px;top:8px;width:8px;height:2px;background:#222"></div>
<div class="a" style="left:1352px;top:5px;width:2px;height:8px;background:#222"></div>
</div>
<!-- TASKBAR -->
<div id="taskbar" class="a">
<svg class="a" style="left:0;top:0" width="1366" height="40" viewBox="0 0 1366 40">
<defs><linearGradient id="lb" x1="0" y1="0" x2="1" y2="0"><stop offset="0" stop-color="#2a9460" stop-opacity="0"/><stop offset="0.6" stop-color="#8cbaa6"/><stop offset="1" stop-color="#78aa94"/></linearGradient>
<linearGradient id="soft" x1="0" y1="0" x2="1" y2="0"><stop offset="0" stop-color="#fff" stop-opacity="0"/><stop offset="0.35" stop-color="#fff" stop-opacity="0.13"/><stop offset="1" stop-color="#fff" stop-opacity="0"/></linearGradient></defs>
<rect width="1366" height="40" fill="#248d58"/>
<path d="M540 0H760L716 40H496z" fill="url(#soft)"/>
<path d="M1048 0H1080L1034 40H1002z" fill="url(#lb)"/>
<path d="M1080 0H1104L1057 40H1034z" fill="#3f7b56"/>
<path d="M1104 0H1186L1144 40H1057z" fill="#659a86"/>
<path d="M1186 0H1215L1172 40H1144z" fill="#4b7f63"/>
<path d="M1215 0H1241L1207 40H1172z" fill="#5f9681"/>
<path d="M1241 0H1265L1230 40H1207z" fill="#3f8455"/>
<path d="M1265 0H1269L1234 40H1230z" fill="#5aaa7c"/>
<path d="M1269 0H1366V40H1234z" fill="#28975c"/>
</svg>
<!-- windows logo -->
<svg class="a" style="left:11px;top:6px" width="28" height="27" viewBox="0 0 28 27"><path d="M1 3.5L11 2.2V12.5H1zM12.5 2L27 0V12.5H12.5zM1 14H11V24.5L1 23.2zM12.5 14H27V26.5L12.5 24.7z" fill="#fff"/></svg>
<!-- IE -->
<svg class="a" style="left:65px;top:3px" width="32" height="34" viewBox="0 0 32 34">
<defs><radialGradient id="ieg" cx="0.4" cy="0.35" r="0.7"><stop offset="0" stop-color="#b8f4ff"/><stop offset="0.6" stop-color="#5cc8f0"/><stop offset="1" stop-color="#1a7ec8"/></radialGradient>
<mask id="iem"><rect width="32" height="34" fill="#fff"/><path d="M10.5 15.5A7.5 6.5 0 0 1 25.5 15.5z" fill="#000"/><path d="M11 19.5H32V24H16A5 5 0 0 1 11 19.5z" fill="#000"/></mask></defs>
<circle cx="18" cy="17" r="12.8" fill="url(#ieg)" mask="url(#iem)"/>
<path d="M4 30C1 27 6 14 15 8C22 3.5 29 2 30 5C30.5 7 29 9.5 27.5 11" fill="none" stroke="#f0c428" stroke-width="2.2" stroke-linecap="round"/>
</svg>
<!-- chrome active -->
<div class="a" style="left:114px;top:1px;width:53px;height:38px;background:rgba(170,215,190,.3);border:1px solid rgba(190,240,210,.5)"></div>
<div class="a" style="left:168px;top:1px;width:4px;height:38px;background:rgba(170,215,190,.3);border:1px solid rgba(190,240,210,.5)"></div>
<svg class="a" style="left:126px;top:5px" width="30" height="30" viewBox="0 0 30 30"><circle cx="15" cy="15" r="14" fill="#3aa24a"/><path d="M15 1A14 14 0 0 1 27.1 8H15A7 7 0 0 0 8.9 11.5L2.9 8A14 14 0 0 1 15 1z" fill="#db4437"/><path d="M27.1 8A14 14 0 0 1 15 29L21 18.5A7 7 0 0 0 21 11z" fill="#f4c20d"/><circle cx="15" cy="15" r="6" fill="#fff"/><circle cx="15" cy="15" r="4.6" fill="#4285f4"/><path d="M16 17C19 15 25 16 27 21C28 26 25 30 21 30C18 30 16 27 16 24z" fill="#4a2a1a"/><path d="M17 20C19 18 22 19 22.5 22C23 25 21 27 18.5 26.5C17 26 16.5 23 17 20z" fill="#e0c0a0"/><path d="M22 25C24 24 27 25 26 29C24 31 21 30 21.5 28z" fill="#f4ece0"/><path d="M18 24.5H21.5" stroke="#2a1a10" stroke-width="1"/></svg>
<!-- explorer -->
<div class="a" style="left:176px;top:1px;width:58px;height:38px;background:rgba(170,215,190,.3);border:1px solid rgba(190,240,210,.5)"></div>
<svg class="a" style="left:189px;top:7px" width="33" height="29" viewBox="0 0 33 29">
<path d="M1 2H10L12 4H31V26H1z" fill="#e2b850"/>
<path d="M1 5H31V26H1z" fill="#f8e2a0"/>
<path d="M1 9H31V26H1z" fill="#f4d88a"/>
<rect x="2.5" y="1" width="4" height="2.5" fill="#3aa040"/><rect x="11" y="3" width="5" height="2.5" fill="#b03828"/><rect x="20" y="5.5" width="6" height="3" fill="#3a88c8"/>
<path d="M4.5 16H27.5V28H22.5V21H9.5V28H4.5z" fill="#8ccaf0" stroke="#4a9ad0" stroke-width="0.6"/>
<path d="M5 16.5H27V19H5z" fill="#c4e8fc"/>
</svg>
<!-- store -->
<div class="a" style="left:252px;top:5px;width:29px;height:29px;background:#0c8c14"></div>
<svg class="a" style="left:255px;top:7px" width="24" height="26" viewBox="0 0 24 26"><path d="M8 8V5.5A4 4 0 0 1 16 5.5V8" fill="none" stroke="#f0fff0" stroke-width="1.6"/><path d="M2 8H20.5L22 24L3 22.5z" fill="#f2fff2"/><path d="M4.5 11.5H9V16H4.5zM10 11.5H14.5V16H10zM4.5 17H9V21H4.5zM10 17H14.5V21.5H10z" fill="#0c8c14"/></svg>
<!-- chrome -->
<svg class="a" style="left:315px;top:6px" width="29" height="29" viewBox="0 0 30 30"><circle cx="15" cy="15" r="14" fill="#3aa24a"/><path d="M15 1A14 14 0 0 1 27.1 8H15A7 7 0 0 0 8.9 11.5L2.9 8A14 14 0 0 1 15 1z" fill="#db4437"/><path d="M27.1 8A14 14 0 0 1 15 29L21 18.5A7 7 0 0 0 21 11z" fill="#f4c20d"/><circle cx="15" cy="15" r="6" fill="#fff"/><circle cx="15" cy="15" r="4.6" fill="#4285f4"/></svg>
<!-- snipping -->
<svg class="a" style="left:375px;top:5px" width="34" height="34" viewBox="0 0 34 34">
<ellipse cx="8.5" cy="17.5" rx="7.5" ry="4.5" fill="#c4dcc4"/>
<ellipse cx="13.5" cy="8" rx="10.5" ry="6.5" transform="rotate(-15 13.5 8)" fill="#f2e4ee" stroke="#9a2a2a" stroke-width="1.3"/>
<path d="M6 3L16 16M10.5 2L16.5 15" stroke="#4a5a5a" stroke-width="1.3"/>
<ellipse cx="16" cy="22" rx="3.5" ry="6" transform="rotate(-35 16 22)" fill="none" stroke="#2a78b0" stroke-width="2"/>
<ellipse cx="23" cy="19" rx="6" ry="3.5" transform="rotate(-35 23 19)" fill="none" stroke="#2a78b0" stroke-width="2"/>
</svg>
<!-- word active -->
<div class="a" style="left:424px;top:1px;width:58px;height:38px;background:rgba(215,215,205,.45);border:1px solid rgba(235,255,240,.85)"></div>
<svg class="a" style="left:436px;top:5px" width="34" height="32" viewBox="0 0 34 32">
<defs><linearGradient id="wg" x1="0" y1="0" x2="1" y2="0"><stop offset="0" stop-color="#1a3a98"/><stop offset="1" stop-color="#8aa8e0"/></linearGradient></defs>
<path d="M2.5 27V9Q2.5 2.5 9 2.5H27V27z" fill="url(#wg)" stroke="#fff" stroke-width="1.2"/>
<path d="M8 5.5L31 7.5L30 31L7 29.5z" fill="#fafcfd" stroke="#c8d4dc" stroke-width="0.6"/>
<path d="M11 10L13 16.5L15 12L17 16.5L19.5 10" fill="none" stroke="#2a3a90" stroke-width="2"/>
<path d="M20.5 10.5H26M20.5 13.5H26M20.5 16.5H26M10.5 20H26M10 23.5H26" stroke="#1a2a80" stroke-width="1.6"/>
</svg>
<!-- tray -->
<svg class="a" style="left:1123px;top:14px" width="17" height="13" viewBox="0 0 17 13"><path d="M3 10A2.5 2.5 0 0 1 2.5 5A3.5 3.5 0 0 1 9 3.5A2.5 2.5 0 0 1 12 6" fill="#fff" stroke="#2a3a30" stroke-width="0.6"/><path d="M5.5 12.5A2.5 2.5 0 0 1 5.5 7.5A3.5 3.5 0 0 1 12 6.5A3 3 0 0 1 15 12.5z" fill="#fff" stroke="#2a3a30" stroke-width="0.6"/></svg>
<svg class="a" style="left:1146px;top:13px" width="18" height="16" viewBox="0 0 18 16"><path d="M2 0.5V15.5" stroke="#fff" stroke-width="1.8"/><path d="M3 1.5H9.5V3.5H15.5L13.5 7.5L15.5 8.5H9.5V8H3z" fill="#f4f4f4" stroke="#2a3a30" stroke-width="0.5"/></svg>
<svg class="a" style="left:1177px;top:13px" width="10" height="16" viewBox="0 0 10 16"><rect x="3" y="0" width="4" height="1.5" fill="#fff"/><rect x="1" y="1.5" width="8" height="14" fill="none" stroke="#fff" stroke-width="1.6"/><rect x="2.8" y="8.5" width="4.4" height="5" fill="#fff"/><rect x="2.8" y="3.3" width="4.4" height="4.8" fill="#3a4a40"/></svg>
<svg class="a" style="left:1195px;top:14px" width="17" height="13" viewBox="0 0 17 13"><rect x="0.5" y="9" width="2.4" height="3.5" fill="#fff" stroke="#2a3a30" stroke-width="0.4"/><rect x="3.9" y="7" width="2.4" height="5.5" fill="#fff" stroke="#2a3a30" stroke-width="0.4"/><rect x="7.3" y="5" width="2.4" height="7.5" fill="#fff" stroke="#2a3a30" stroke-width="0.4"/><rect x="10.7" y="3" width="2.4" height="9.5" fill="#8a8a8a" stroke="#2a3a30" stroke-width="0.4"/><rect x="14.1" y="1" width="2.4" height="11.5" fill="#8a8a8a" stroke="#2a3a30" stroke-width="0.4"/></svg>
<svg class="a" style="left:1217px;top:11px" width="18" height="18" viewBox="0 0 18 18"><path d="M1 6H4L9 1V17L4 12H1z" fill="#fff"/><path d="M11 6Q13 9 11 12M13 4Q16.5 9 13 14M15 2Q20 9 15 16" fill="none" stroke="#fff" stroke-width="1.3"/></svg>
<div class="a" style="left:1249px;top:14px;font-size:11px;letter-spacing:-0.5px;line-height:13px;color:#e6f6ea;white-space:nowrap">ENG</div>
<div class="a" style="left:1304px;top:6px;font-size:11.3px;line-height:13px;color:#e6f6ea;white-space:nowrap">02:53</div>
<div class="a" style="left:1288px;top:23px;font-size:11.5px;line-height:13px;color:#e6f6ea;white-space:nowrap">29-03-2020</div>
</div>
</body></html>
